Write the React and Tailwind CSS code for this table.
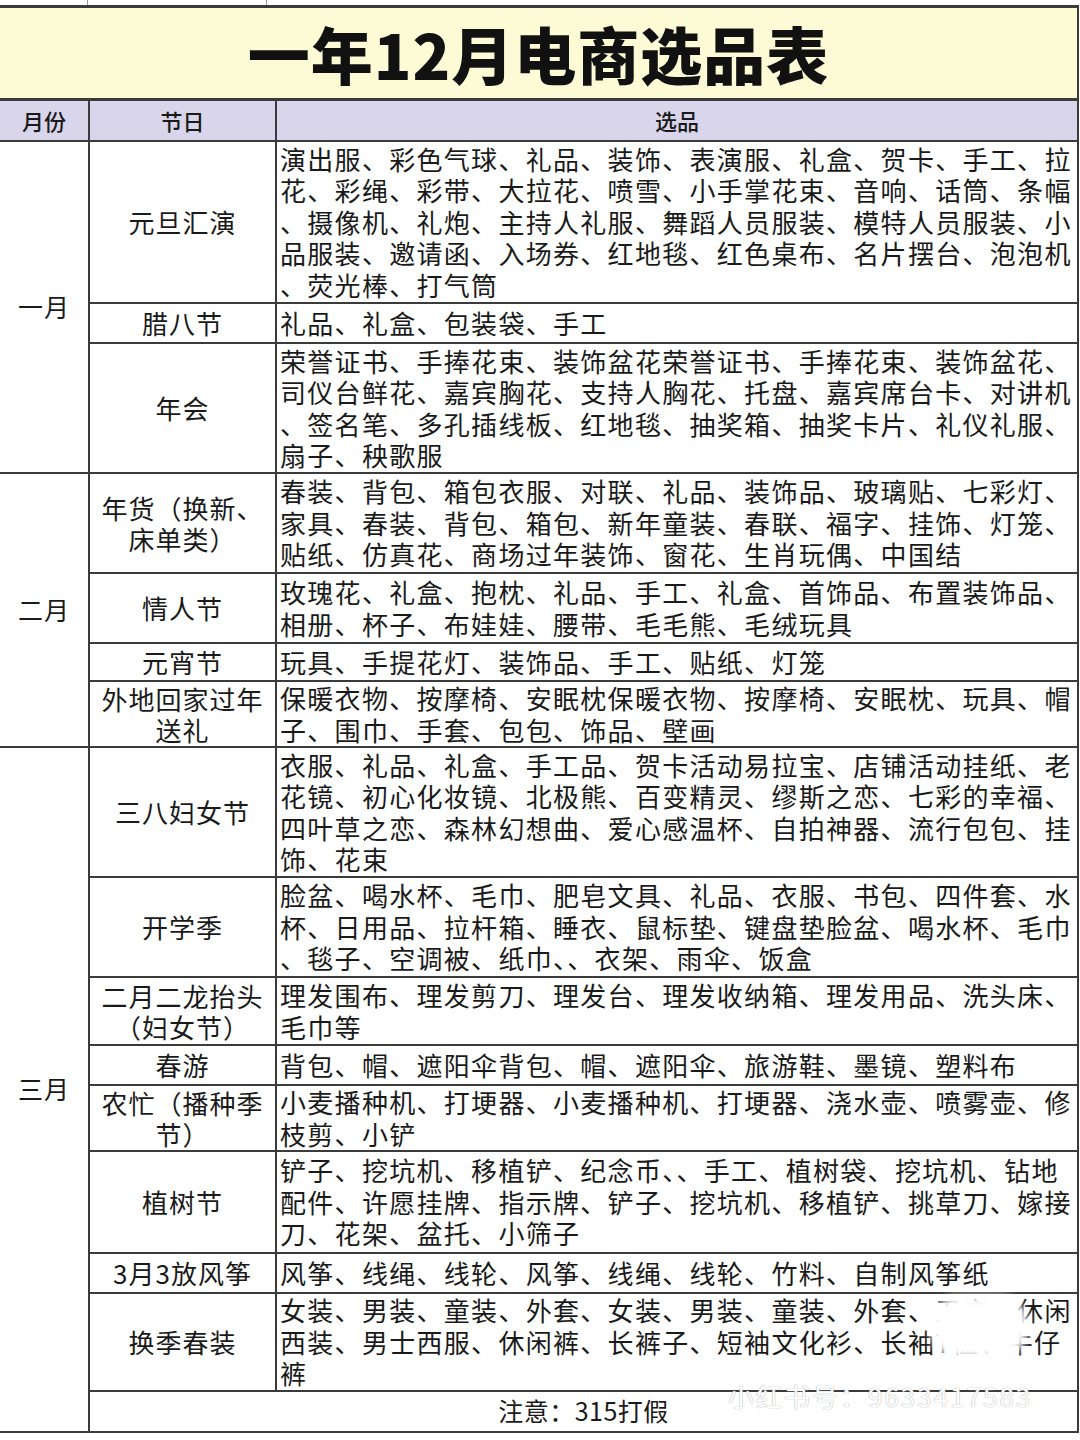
import React from 'react';

const font = { fontFamily: '"Noto Sans CJK SC", "Noto Sans", sans-serif' };

const months = [
  {
    month: '一月',
    items: [
      {
        name: ['元旦汇演'],
        h: 'h-[162px]',
        lines: [
          '演出服、彩色气球、礼品、装饰、表演服、礼盒、贺卡、手工、拉',
          '花、彩绳、彩带、大拉花、喷雪、小手掌花束、音响、话筒、条幅',
          '、摄像机、礼炮、主持人礼服、舞蹈人员服装、模特人员服装、小',
          '品服装、邀请函、入场券、红地毯、红色桌布、名片摆台、泡泡机',
          '、荧光棒、打气筒',
        ],
      },
      { name: ['腊八节'], h: 'h-[40px]', lines: ['礼品、礼盒、包装袋、手工'] },
      {
        name: ['年会'],
        h: 'h-[130px]',
        lines: [
          '荣誉证书、手捧花束、装饰盆花荣誉证书、手捧花束、装饰盆花、',
          '司仪台鲜花、嘉宾胸花、支持人胸花、托盘、嘉宾席台卡、对讲机',
          '、签名笔、多孔插线板、红地毯、抽奖箱、抽奖卡片、礼仪礼服、',
          '扇子、秧歌服',
        ],
      },
    ],
  },
  {
    month: '二月',
    items: [
      {
        name: ['年货（换新、', '床单类）'],
        h: 'h-[100px]',
        lines: [
          '春装、背包、箱包衣服、对联、礼品、装饰品、玻璃贴、七彩灯、',
          '家具、春装、背包、箱包、新年童装、春联、福字、挂饰、灯笼、',
          '贴纸、仿真花、商场过年装饰、窗花、生肖玩偶、中国结',
        ],
      },
      {
        name: ['情人节'],
        h: 'h-[70px]',
        lines: [
          '玫瑰花、礼盒、抱枕、礼品、手工、礼盒、首饰品、布置装饰品、',
          '相册、杯子、布娃娃、腰带、毛毛熊、毛绒玩具',
        ],
      },
      { name: ['元宵节'], h: 'h-[38px]', lines: ['玩具、手提花灯、装饰品、手工、贴纸、灯笼'] },
      {
        name: ['外地回家过年', '送礼'],
        h: 'h-[66px]',
        lines: [
          '保暖衣物、按摩椅、安眠枕保暖衣物、按摩椅、安眠枕、玩具、帽',
          '子、围巾、手套、包包、饰品、壁画',
        ],
      },
    ],
  },
  {
    month: '三月',
    items: [
      {
        name: ['三八妇女节'],
        h: 'h-[130px]',
        lines: [
          '衣服、礼品、礼盒、手工品、贺卡活动易拉宝、店铺活动挂纸、老',
          '花镜、初心化妆镜、北极熊、百变精灵、缪斯之恋、七彩的幸福、',
          '四叶草之恋、森林幻想曲、爱心感温杯、自拍神器、流行包包、挂',
          '饰、花束',
        ],
      },
      {
        name: ['开学季'],
        h: 'h-[100px]',
        lines: [
          '脸盆、喝水杯、毛巾、肥皂文具、礼品、衣服、书包、四件套、水',
          '杯、日用品、拉杆箱、睡衣、鼠标垫、键盘垫脸盆、喝水杯、毛巾',
          '、毯子、空调被、纸巾、、衣架、雨伞、饭盒',
        ],
      },
      {
        name: ['二月二龙抬头', '（妇女节）'],
        h: 'h-[68px]',
        lines: ['理发围布、理发剪刀、理发台、理发收纳箱、理发用品、洗头床、', '毛巾等'],
      },
      { name: ['春游'], h: 'h-[40px]', lines: ['背包、帽、遮阳伞背包、帽、遮阳伞、旅游鞋、墨镜、塑料布'] },
      {
        name: ['农忙（播种季', '节）'],
        h: 'h-[66px]',
        lines: ['小麦播种机、打埂器、小麦播种机、打埂器、浇水壶、喷雾壶、修', '枝剪、小铲'],
      },
      {
        name: ['植树节'],
        h: 'h-[102px]',
        lines: [
          '铲子、挖坑机、移植铲、纪念币、、手工、植树袋、挖坑机、钻地',
          '配件、许愿挂牌、指示牌、铲子、挖坑机、移植铲、挑草刀、嫁接',
          '刀、花架、盆托、小筛子',
        ],
      },
      { name: ['3月3放风筝'], h: 'h-[40px]', lines: ['风筝、线绳、线轮、风筝、线绳、线轮、竹料、自制风筝纸'] },
      {
        name: ['换季春装'],
        h: 'h-[98px]',
        lines: [
          '女装、男装、童装、外套、女装、男装、童装、外套、卫衣、休闲',
          '西装、男士西服、休闲裤、长裤子、短袖文化衫、长袖T恤、牛仔',
          '裤',
        ],
      },
    ],
  },
];

const cellBorder = 'border-2 border-[#3b3b3b]';

export default function App() {
  return (
    <div className="relative w-[1080px] h-[1440px] bg-white text-[#1a1a1a] overflow-hidden" style={font}>
      {/* strip of the spreadsheet row above */}
      <div className="flex h-[5px]">
        <div className="w-[88px] border-r border-[#9a9a9a]" />
        <div className="w-[179px] border-r border-[#9a9a9a]" />
      </div>

      <table className="w-[1079px] border-collapse table-fixed">
        <colgroup>
          <col className="w-[89px]" />
          <col className="w-[187px]" />
          <col />
        </colgroup>
        <tbody>
          <tr className="h-[93px]">
            <td
              colSpan={3}
              className="bg-[#fdfbd6] border-y-[3px] border-r-2 border-[#3b3b3b] text-center text-[62px] font-black leading-none tracking-[1px] text-[#111]"
            >
              一年12月电商选品表
            </td>
          </tr>
          <tr className="h-[41px] bg-[#d9d6eb] text-[22px] font-medium">
            <td className="border-y-2 border-r-2 border-[#3b3b3b] text-center">月份</td>
            <td className={`${cellBorder} text-center`}>节日</td>
            <td className={`${cellBorder} text-center`}>选品</td>
          </tr>

          {months.map((m, mi) =>
            m.items.map((it, i) => (
              <tr key={`${mi}-${i}`} className={it.h}>
                {i === 0 && (
                  <td
                    rowSpan={m.items.length + (mi === 2 ? 1 : 0)}
                    className="border-y-2 border-r-2 border-[#3b3b3b] text-center text-[25px] tracking-[1px] align-middle"
                  >
                    {m.month}
                  </td>
                )}
                <td className={`${cellBorder} text-center text-[26px] leading-[31px] tracking-[1px] align-middle`}>
                  {it.name.map((n) => (
                    <div key={n} className="whitespace-nowrap">
                      {n}
                    </div>
                  ))}
                </td>
                <td className={`${cellBorder} pl-[3px] text-[26px] leading-[31.5px] tracking-[1.3px] align-middle`}>
                  {it.lines.map((l, li) => (
                    <div key={li} className="whitespace-nowrap">
                      {l}
                    </div>
                  ))}
                </td>
              </tr>
            ))
          )}

          <tr className="h-[41px]">
            <td colSpan={2} className={`${cellBorder} text-center text-[25px] tracking-[0.5px]`}>
              注意：315打假
            </td>
          </tr>
        </tbody>
      </table>

      {/* watermark */}
      <div className="absolute left-[930px] top-[1296px] w-[98px] h-[62px] rounded-[28px] bg-white blur-[4px]" />
      <div
        className="absolute left-[728px] top-[1376px] text-[26px] tracking-[2px] text-white whitespace-nowrap"
        style={{ textShadow: '0 0 1px #b0b0b0, 0 0 1px #b0b0b0' }}
      >
        小红书号：9633417583
      </div>
    </div>
  );
}
